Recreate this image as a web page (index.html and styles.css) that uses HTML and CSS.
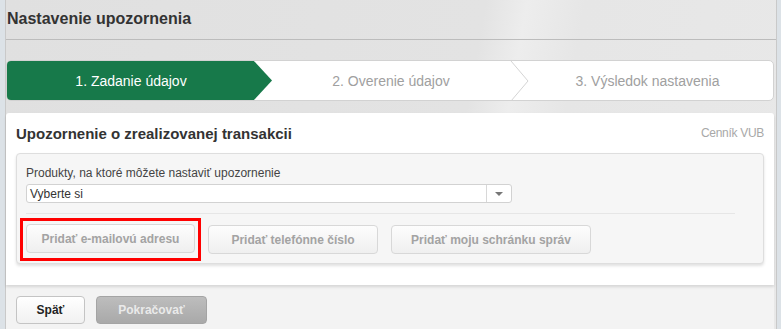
FILE: index.html
```html
<!DOCTYPE html>
<html lang="sk">
<head>
    <meta charset="UTF-8">
    <title>Nastavenie upozornenia</title>
    <link rel="stylesheet" href="styles.css">
</head>
<body>
    <div class="page">
        <header class="top">
            <h1>Nastavenie upozornenia</h1>
        </header>

        <div class="steps">
            <div class="step step-active">1. Zadanie údajov</div>
            <div class="step step-two">2. Overenie údajov</div>
            <svg class="chevron" width="20" height="40" viewBox="0 0 20 40">
                <polyline points="1,0 18,20 1,40" fill="none" stroke="#d4d4d4" stroke-width="1"/>
            </svg>
            <div class="step step-three">3. Výsledok nastavenia</div>
        </div>

        <div class="card">
            <div class="card-head">
                <h2>Upozornenie o zrealizovanej transakcii</h2>
                <a href="#" class="price-link">Cenník VUB</a>
            </div>
            <div class="panel">
                <label for="product">Produkty, na ktoré môžete nastaviť upozornenie</label>
                <div class="select">
                    <span class="select-value">Vyberte si</span>
                    <span class="select-arrow"></span>
                </div>
                <div class="panel-buttons">
                    <span class="marked">
                        <button class="btn-add btn-mail">Pridať e-mailovú adresu</button>
                    </span>
                    <button class="btn-add btn-phone">Pridať telefónne číslo</button>
                    <button class="btn-add btn-box">Pridať moju schránku správ</button>
                </div>
            </div>
        </div>

        <div class="actions">
            <button class="btn-back">Späť</button>
            <button class="btn-next">Pokračovať</button>
        </div>
    </div>
</body>
</html>
```

FILE: styles.css
```css
* {
    margin: 0;
    padding: 0;
    box-sizing: border-box;
}

body {
    font-family: "Liberation Sans", Arial, sans-serif;
    background-color: #dce2e7;
    height: 329px;
    overflow: hidden;
}

.page {
    margin-left: 5px;
    margin-right: 4px;
    height: 329px;
    border-left: 1px solid #c9c9c9;
    border-right: 1px solid #c9c9c9;
    background: linear-gradient(100deg, #e0e0e0 0%, #e3e3e3 58%, #ededed 63%, #e6e6e6 70%, #e8e8e8 100%);
}

.top {
    height: 40px;
    padding: 0 1px;
    border-bottom: 1px solid #bcbcbc;
    display: flex;
    align-items: center;
}

h1 {
    font-size: 16px;
    font-weight: bold;
    color: #333;
    padding-bottom: 2px;
}

/* kroky */
.steps {
    margin: 20px 2px 0 0;
    height: 41px;
    display: flex;
    background-color: #fff;
    border: 1px solid #d2d2d2;
    border-radius: 5px;
    overflow: hidden;
}

.step {
    display: flex;
    align-items: center;
    justify-content: center;
    font-size: 14px;
    color: #a0a0a0;
}

.step-active {
    width: 266px;
    margin: -1px 0 -1px -1px;
    padding-right: 16px;
    color: #fff;
    background-color: #17794a;
    clip-path: polygon(0 0, calc(100% - 19px) 0, 100% 50%, calc(100% - 19px) 100%, 0 100%);
}

.step-two {
    width: 238px;
}

.chevron {
    flex-shrink: 0;
}

.step-three {
    flex: 1;
    padding-right: 8px;
}

/* tarjeta */
.card {
    margin: 12px 2px 0 0;
    background-color: #fff;
    border-radius: 3px 3px 0 0;
    padding: 0 10px 21px 10px;
    box-shadow: 0 2px 3px rgba(0, 0, 0, 0.12);
    position: relative;
}

.card-head {
    height: 40px;
    display: flex;
    align-items: center;
    justify-content: space-between;
}

h2 {
    font-size: 15px;
    font-weight: bold;
    color: #333;
}

.price-link {
    font-size: 12px;
    color: #a8a8a8;
    text-decoration: none;
    letter-spacing: -0.3px;
}

.panel {
    background-color: #f6f6f6;
    border: 1px solid #dedede;
    border-radius: 4px;
    padding: 12px 28px 9px 9px;
    box-shadow: 0 2px 3px rgba(0, 0, 0, 0.12);
}

label {
    display: block;
    font-size: 12px;
    color: #444;
    margin-bottom: 4px;
}

.select {
    width: 486px;
    height: 19px;
    display: flex;
    background-color: #fff;
    border: 1px solid #d2d2d2;
    border-radius: 3px;
}

.select-value {
    flex: 1;
    font-size: 12px;
    color: #333;
    padding: 2px 3px;
}

.select-arrow {
    width: 25px;
    border-left: 1px solid #d8d8d8;
    display: flex;
    align-items: center;
    justify-content: center;
}

.select-arrow::after {
    content: "";
    border-left: 4px solid transparent;
    border-right: 4px solid transparent;
    border-top: 4px solid #777;
}

.panel-buttons {
    margin-top: 10px;
    padding-top: 11px;
    border-top: 1px solid #e6e6e6;
    display: flex;
    gap: 13px;
}

/* marco rojo alrededor del primer boton */
.marked {
    display: flex;
    margin: -7px -7px -7px -6px;
    padding: 3px;
    border: 3px solid #f00;
}

.btn-add {
    height: 29px;
    font-family: inherit;
    font-size: 12px;
    font-weight: bold;
    color: #a3a3a3;
    background: linear-gradient(#fdfdfd, #efefef);
    border: 1px solid #d8d8d8;
    border-radius: 4px;
}

.btn-mail {
    width: 169px;
}

.btn-phone {
    width: 170px;
    margin-left: 1px;
}

.btn-box {
    width: 200px;
}

/* botones de abajo */
.actions {
    height: 46px;
    margin-right: 2px;
    padding: 11px 10px 0 10px;
    display: flex;
    gap: 11px;
    background-color: #f3f3f3;
}

.actions button {
    height: 28px;
    font-family: inherit;
    font-size: 12px;
    font-weight: bold;
    border-radius: 4px;
}

.btn-back {
    width: 69px;
    color: #222;
    background: linear-gradient(#ffffff, #f1f1f1);
    border: 1px solid #c4c4c4;
}

.btn-next {
    width: 111px;
    color: #eaeaea;
    background: linear-gradient(#bdbdbd, #a9a9a9);
    border: 1px solid #a4a4a4;
}
```
